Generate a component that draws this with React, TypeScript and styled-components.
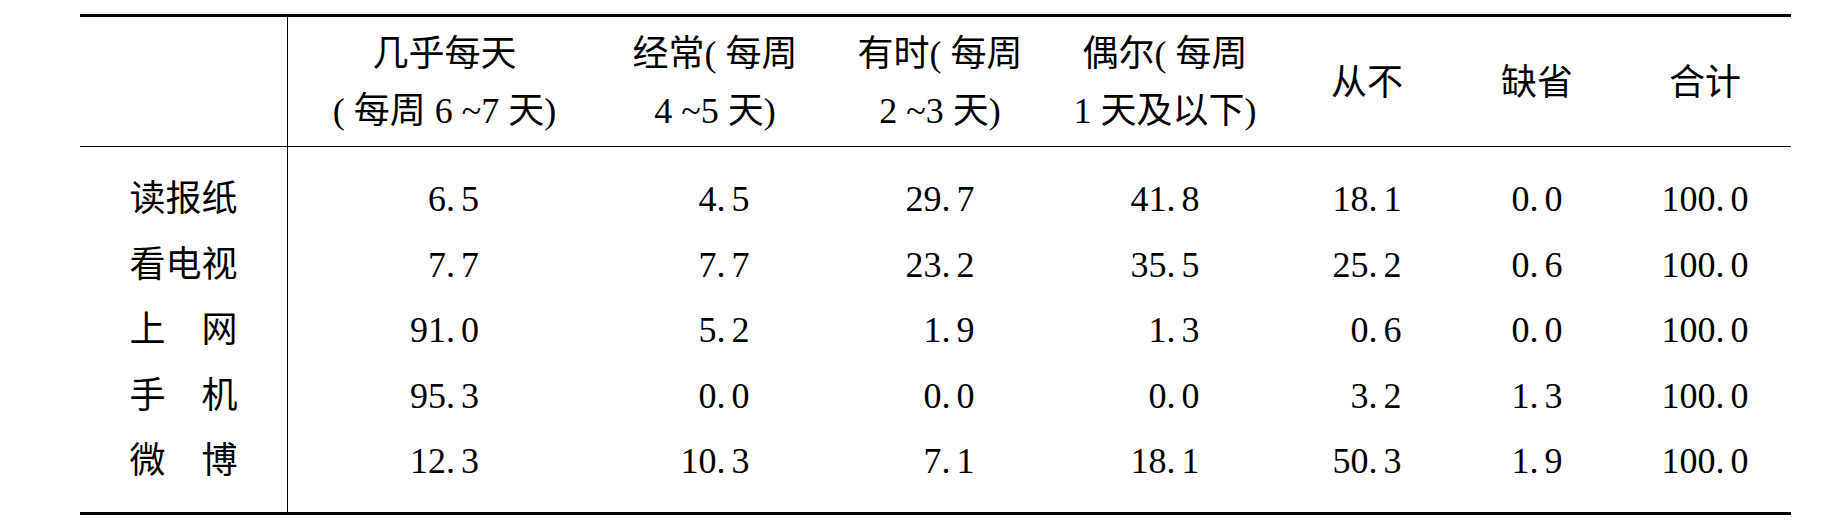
import styled, { createGlobalStyle } from "styled-components";

const GlobalStyle = createGlobalStyle`
  html, body {
    margin: 0;
    padding: 0;
    background: #fff;
  }

  body {
    font-family: "Liberation Serif", "Noto Sans CJK SC", serif;
    color: #000;
  }
`

const LABEL_WIDTH = 208

const columns = [
  { head: ['几乎每天', '( 每周 6 ~7 天)'], width: 313 },
  { head: ['经常( 每周', '4 ~5 天)'], width: 228 },
  { head: ['有时( 每周', '2 ~3 天)'], width: 222 },
  { head: ['偶尔( 每周', '1 天及以下)'], width: 228 },
  { head: ['从不'], width: 176 },
  { head: ['缺省'], width: 164 },
  { head: ['合计'], width: 172 },
]

const rows = [
  { label: '读报纸', values: ['6.5', '4.5', '29.7', '41.8', '18.1', '0.0', '100.0'] },
  { label: '看电视', values: ['7.7', '7.7', '23.2', '35.5', '25.2', '0.6', '100.0'] },
  { label: '上网', values: ['91.0', '5.2', '1.9', '1.3', '0.6', '0.0', '100.0'] },
  { label: '手机', values: ['95.3', '0.0', '0.0', '0.0', '3.2', '1.3', '100.0'] },
  { label: '微博', values: ['12.3', '10.3', '7.1', '18.1', '50.3', '1.9', '100.0'] },
]

const Num = ({ value }: { value: string }) => {
  const [int, dec] = value.split('.')
  return (
    <Value>
      {int}.<Decimal>{dec}</Decimal>
    </Value>
  )
}

const App = () => {
  const template = [LABEL_WIDTH, ...columns.map(c => c.width)].map(w => `${w}px`).join(' ')

  return (
    <Page>
      <GlobalStyle/>
      <Table $columns={template}>
        <HeadCell $divider/>
        {columns.map((col, i) => (
          <HeadCell key={i}>
            <HeadText>
              {col.head.map((line, j) => <div key={j}>{line}</div>)}
            </HeadText>
          </HeadCell>
        ))}

        <BodyCell $divider>
          <LabelStack>
            {rows.map(r => <Label key={r.label}>{r.label}</Label>)}
          </LabelStack>
        </BodyCell>
        {columns.map((_, i) => (
          <BodyCell key={i}>
            <NumberStack>
              {rows.map(r => <Num key={r.label} value={r.values[i]}/>)}
            </NumberStack>
          </BodyCell>
        ))}
      </Table>
    </Page>
  )
}

const Page = styled.div`
  padding: 14px 0 0 80px;
`

const Table = styled.div<{ $columns: string }>`
  display: grid;
  grid-template-columns: ${p => p.$columns};
  width: fit-content;
  border-top: 3px solid #000;
  border-bottom: 3px solid #000;
`

const HeadCell = styled.div<{ $divider?: boolean }>`
  box-sizing: border-box;
  height: 130px;
  display: flex;
  align-items: center;
  justify-content: center;
  border-bottom: 1px solid #000;
  border-right: ${p => p.$divider ? '1px solid #000' : 'none'};
`

const HeadText = styled.div`
  font-size: 36px;
  line-height: 57px;
  text-align: center;
  white-space: nowrap;
  padding-top: 3px;
`

const BodyCell = styled.div<{ $divider?: boolean }>`
  box-sizing: border-box;
  height: 365px;
  padding: 20px 0 0;
  display: flex;
  justify-content: center;
  border-right: ${p => p.$divider ? '1px solid #000' : 'none'};
`

const LabelStack = styled.div`
  width: 108px;
  display: flex;
  flex-direction: column;
`

const Label = styled.div`
  font-size: 36px;
  line-height: 65.5px;
  height: 65.5px;
  text-align: justify;
  text-align-last: justify;
`

const NumberStack = styled.div`
  display: flex;
  flex-direction: column;
  align-items: flex-end;
`

const Value = styled.div`
  font-family: "Liberation Serif", "Times New Roman", serif;
  font-size: 36px;
  line-height: 65.5px;
  height: 65.5px;
  white-space: nowrap;
`

const Decimal = styled.span`
  margin-left: 6px;
`

export default App
